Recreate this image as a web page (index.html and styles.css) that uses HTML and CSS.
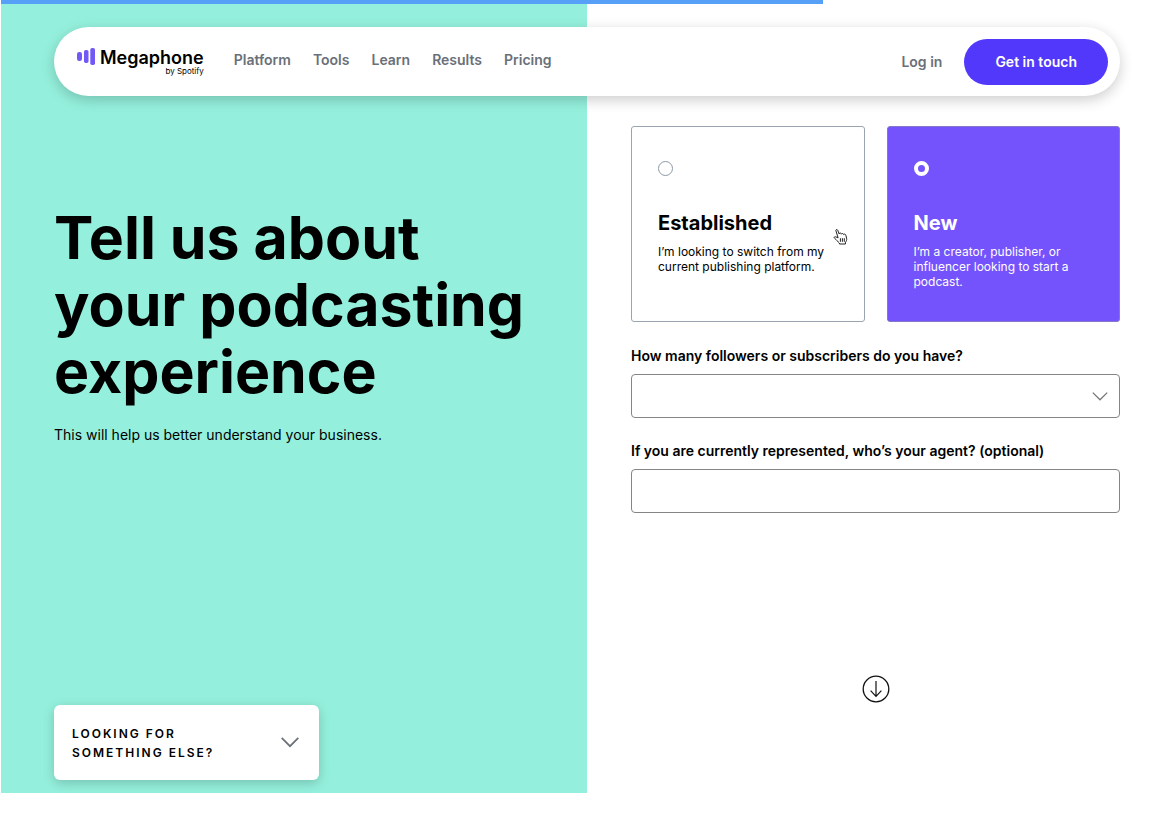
FILE: index.html
```html
<!DOCTYPE html>
<html lang="en">
<head>
<meta charset="utf-8">
<meta name="viewport" content="width=device-width, initial-scale=1">
<title>Megaphone by Spotify</title>
<link rel="stylesheet" href="styles.css">
</head>
<body>
<div class="progress" role="progressbar" aria-label="Form progress" aria-valuenow="70" aria-valuemin="0" aria-valuemax="100"><div class="progress-fill" style="width:70.4%"></div></div>

<header class="site-header">
  <a class="logo" href="#">
    <svg class="logo-mark" width="18" height="17" viewBox="0 0 18 17" aria-hidden="true">
      <rect x="0" y="4" width="5" height="9" rx="2.2"/>
      <rect x="7" y="2" width="4.5" height="13" rx="1.8"/>
      <rect x="13.3" y="0" width="4.7" height="17" rx="1.8"/>
    </svg>
    <span class="logo-text">
      <span class="logo-name">Megaphone</span>
      <span class="logo-by">by Spotify</span>
    </span>
  </a>
  <nav class="nav">
    <a href="#">Platform</a>
    <a href="#">Tools</a>
    <a href="#">Learn</a>
    <a href="#">Results</a>
    <a href="#">Pricing</a>
  </nav>
  <a class="login" href="#">Log in</a>
  <button class="cta" type="button">Get in touch</button>
</header>

<main class="split">
  <section class="intro">
    <div class="intro-copy">
      <h1>Tell us about<br>your podcasting<br>experience</h1>
      <p>This will help us better understand your business.</p>
    </div>
    <button class="else" type="button">
      <span>Looking for<br>something else?</span>
      <svg width="18" height="11" viewBox="0 0 18 11" fill="none" stroke="#6a7078" stroke-width="1.7" aria-hidden="true"><path d="M.7 .9 9 9.2 17.3 .9"/></svg>
    </button>
  </section>

  <form class="form">
    <div class="cards">
      <label class="card">
        <input type="radio" name="experience">
        <span class="card-title">Established</span>
        <span class="card-text">I’m looking to switch from my current publishing platform.</span>
        <svg class="pointer" width="15" height="17" viewBox="0 0 15 17" fill="#fff" stroke="#222" stroke-width="1" stroke-linejoin="round" stroke-linecap="round" aria-hidden="true">
          <path d="M5 9.5 2.9 2.7C2.6 1.5 4.2 1 4.7 2.2L6.2 6C6.2 4.8 8 4.6 8.4 5.8L8.5 6.2C8.9 5.2 10.3 5.3 10.6 6.5 11.2 5.7 12.5 6 12.8 7.2L13.6 10.2C14 12 13.3 13.2 12.5 14.2L12.4 16H6.5L6.3 15C4.8 13.8 3.7 11.8 1.5 10.2.5 9.3 1.6 8.3 2.7 8.8Z"/>
          <path d="M7.4 10.6V13.4M9.4 10.6V13.4M11.3 10.6V13.4"/>
        </svg>
      </label>
      <label class="card card-new">
        <input type="radio" name="experience" checked>
        <span class="card-title">New</span>
        <span class="card-text">I’m a creator, publisher, or influencer looking to start a podcast.</span>
      </label>
    </div>
    <div class="field">
      <label for="followers">How many followers or subscribers do you have?</label>
      <div class="select">
        <select id="followers"><option></option></select>
        <svg width="16" height="9" viewBox="0 0 16 9" fill="none" stroke="#777" stroke-width="1.3" aria-hidden="true"><path d="M.8 .6 8 7.8 15.2 .6"/></svg>
      </div>
    </div>
    <div class="field">
      <label for="agent">If you are currently represented, who’s your agent? (optional)</label>
      <input id="agent" type="text">
    </div>
    <button class="next" type="button" aria-label="Next">
      <svg width="28" height="28" viewBox="0 0 28 28" fill="none" stroke="#111" aria-hidden="true">
        <circle cx="14" cy="14" r="12.8" stroke-width="1.3"/>
        <path d="M14 6V21.3M8.6 15.7 14 21.3 19.4 15.7" stroke-width="1.2"/>
      </svg>
    </button>
  </form>
</main>
</body>
</html>
```
FILE: styles.css
```css
* { box-sizing: border-box; }

body {
  margin: 0;
  padding-left: 1px;
  background: #fff;
  color: #000;
  font-family: Inter, "Liberation Sans", sans-serif;
  font-size: 14px;
}

a { color: inherit; text-decoration: none; }
button, input, select { font: inherit; color: inherit; margin: 0; }
button { cursor: pointer; }

.progress {
  position: absolute;
  top: 0;
  left: 1px;
  right: 0;
  z-index: 2;
}
.progress-fill { height: 4px; background: #57a0f7; }

.site-header {
  position: absolute;
  z-index: 1;
  top: 27px;
  left: 54px;
  right: 48px;
  height: 69px;
  padding: 0 12px 0 23px;
  display: flex;
  align-items: center;
  border-radius: 35px;
  background: #fff;
  box-shadow: 0 4px 14px rgba(0, 0, 0, .2);
}

.logo { display: flex; align-items: flex-start; gap: 5px; }
.logo-mark { fill: #7059f5; }
.logo-text { display: flex; flex-direction: column; align-items: flex-end; }
.logo-name { font-size: 18px; line-height: 19px; font-weight: 600; }
.logo-by { font-size: 8px; line-height: 8px; }

.nav {
  display: flex;
  gap: 22px;
  margin-left: 30px;
  padding-bottom: 4px;
  color: #6a7078;
  font-weight: 600;
}
.login { margin-left: auto; margin-right: 22px; color: #6a7078; font-weight: 600; }
.cta {
  height: 46px;
  padding: 0 31px;
  border: 0;
  border-radius: 23px;
  background: #5138fa;
  color: #fff;
  font-weight: 600;
}

.split {
  display: grid;
  grid-template-columns: 586fr 581fr;
  min-height: calc(100vh - 23px);
}

.intro {
  padding: 204px 24px 13px 53px;
  display: flex;
  flex-direction: column;
  justify-content: space-between;
  align-items: flex-start;
  background: #94f0dc;
}
.intro h1 { margin: 0 0 20px; font-size: 59px; line-height: 67px; font-weight: 700; }
.intro p { margin: 0; line-height: 20px; }

.else {
  width: 265px;
  min-height: 75px;
  padding: 0 20px 0 18px;
  display: flex;
  align-items: center;
  justify-content: space-between;
  border: 0;
  border-radius: 6px;
  background: #fff;
  box-shadow: 0 3px 12px rgba(0, 0, 0, .2);
  text-align: left;
  text-transform: uppercase;
  font-size: 12px;
  line-height: 19px;
  font-weight: 600;
  letter-spacing: 2px;
}

.form {
  padding: 126px 48px 90px 44px;
  display: flex;
  flex-direction: column;
}

.cards { display: grid; grid-template-columns: 1fr 1fr; gap: 22px; margin-bottom: 24px; }
.card {
  position: relative;
  min-height: 196px;
  padding: 34px 26px 20px;
  display: flex;
  flex-direction: column;
  border: 1px solid #9aa5b1;
  border-radius: 3px;
}
.card input {
  appearance: none;
  width: 15px;
  height: 15px;
  margin: 0 0 34px;
  border: 1px solid #8d98a5;
  border-radius: 50%;
}
.card-title { font-size: 20px; line-height: 26px; font-weight: 700; margin-bottom: 8px; }
.card-text { font-size: 12px; line-height: 15px; }
.card-new { background: #7553fc; color: #fff; border-color: #8478c8; }
.card input:checked { border: 4px solid #fff; }
.pointer { position: absolute; right: 16px; top: 101px; }

.field { display: flex; flex-direction: column; gap: 8px; margin-bottom: 23px; }
.field label { line-height: 20px; font-weight: 600; }
.field select, .field > input {
  width: 100%;
  height: 44px;
  padding: 0 14px;
  border: 1px solid #858585;
  border-radius: 4px;
  background: #fff;
}
.select { display: grid; align-items: center; }
.select > * { grid-area: 1 / 1; }
.select select { appearance: none; }
.select svg { justify-self: end; margin-right: 12px; pointer-events: none; }

.next {
  margin-top: auto;
  align-self: center;
  display: flex;
  padding: 0;
  border: 0;
  border-radius: 50%;
  background: none;
}
```
